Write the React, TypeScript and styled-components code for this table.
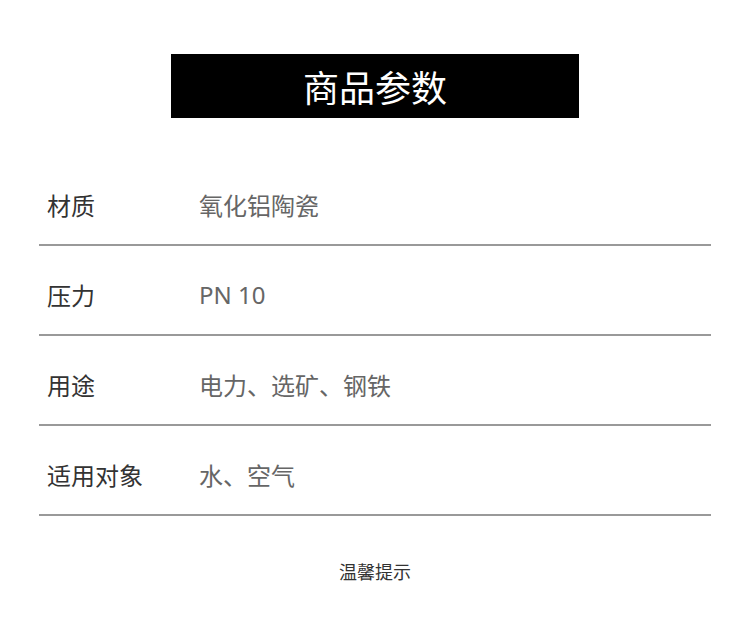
import React from "react";
import styled, { createGlobalStyle } from "styled-components";

const Global = createGlobalStyle`
  html, body { margin: 0; padding: 0; background: #fff; }
  body { font-family: "Noto Sans", "Noto Sans CJK SC", sans-serif; }
`;

const Page = styled.div`
  width: 750px;
  padding-top: 54px;
  display: flex;
  flex-direction: column;
  align-items: center;
`;

const TitleBar = styled.div`
  width: 408px;
  height: 64px;
  background: #000;
  color: #fff;
  display: flex;
  align-items: center;
  justify-content: center;
  font-size: 36px;
  font-family: "Noto Sans CJK SC", sans-serif;
`;

const Table = styled.div`
  margin-top: 38px;
  width: 672px;
  display: flex;
  flex-direction: column;
`;

const Row = styled.div`
  height: 80px;
  box-sizing: content-box;
  border-bottom: 2px solid #999;
  display: flex;
  align-items: center;
  padding-top: 8px;
  padding-left: 8px;
  font-size: 24px;
  font-family: "Noto Sans", "Noto Sans CJK SC", sans-serif;
`;

const Label = styled.div`
  width: 152px;
  color: #333;
`;

const Value = styled.div`
  color: #666;
`;

const Footer = styled.div`
  margin-top: 42px;
  font-size: 18px;
  line-height: 26px;
  color: #333;
  font-family: "Noto Sans CJK SC", sans-serif;
`;

const rows = [
  ["材质", "氧化铝陶瓷"],
  ["压力", "PN 10"],
  ["用途", "电力、选矿、钢铁"],
  ["适用对象", "水、空气"],
];

export default function App() {
  return (
    <>
      <Global />
      <Page>
        <TitleBar>商品参数</TitleBar>
        <Table>
          {rows.map(([k, v]) => (
            <Row key={k}>
              <Label>{k}</Label>
              <Value>{v}</Value>
            </Row>
          ))}
        </Table>
        <Footer>温馨提示</Footer>
      </Page>
    </>
  );
}
